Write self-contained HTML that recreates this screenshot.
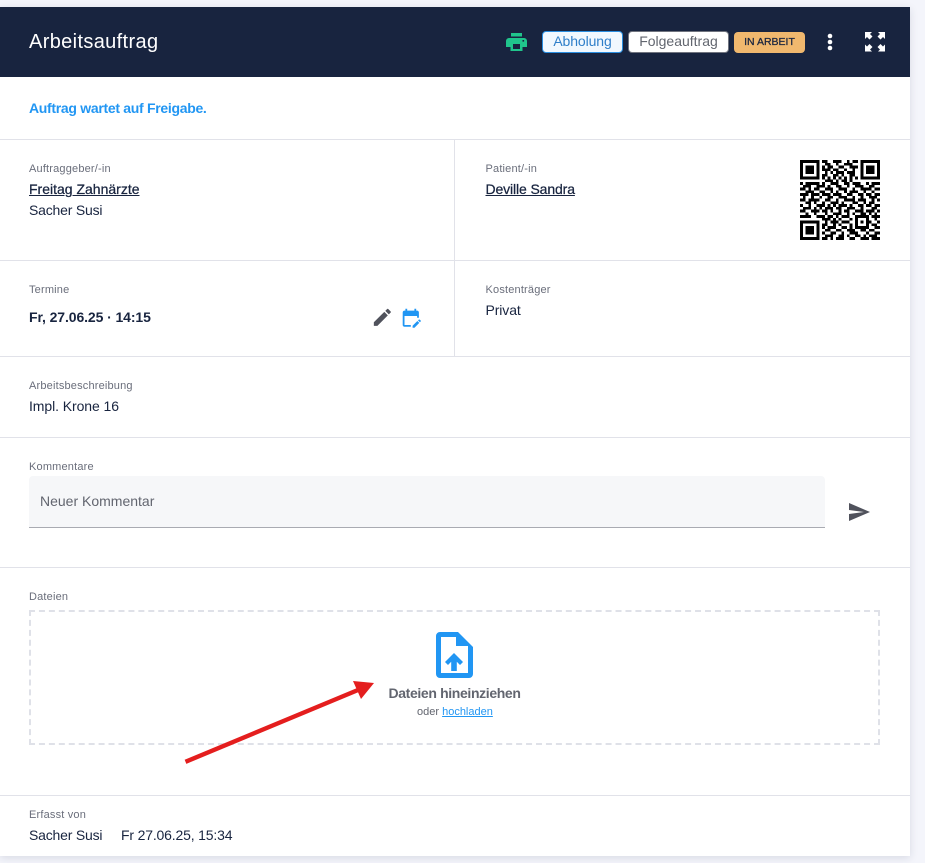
<!DOCTYPE html>
<html lang="de">
<head>
<meta charset="utf-8">
<title>Arbeitsauftrag</title>
<style>
html,body{margin:0;padding:0;width:925px;height:863px;overflow:hidden;background:#f4f5fb;font-family:"Liberation Sans",Arial,sans-serif;color:#18243f}
#card{position:absolute;left:0;top:7px;width:910px;height:849px;background:#fff;box-shadow:0 2px 8px rgba(30,40,70,.13)}
#head{position:absolute;left:0;top:7px;width:910px;height:70px;background:#18243f}
.t{position:absolute;white-space:nowrap;line-height:20px;font-size:14px}
.l{font-size:11px;color:#6a6e7b;letter-spacing:.18px;margin-top:1px}
.m{-webkit-text-stroke:.25px currentColor}
.hr{position:absolute;left:0;width:910px;height:1px;background:#e1e2e9}
.b{position:absolute;box-sizing:border-box;border-radius:4px;text-align:center;white-space:nowrap}
svg{position:absolute;overflow:visible}
a{color:inherit}
</style>
</head>
<body>
<div id="card"></div>
<div id="head"></div>
<div class="t" style="left:29px;top:31px;font-size:20px;line-height:22px;color:#fff;letter-spacing:.35px">Arbeitsauftrag</div>

<svg style="left:0;top:0" width="925" height="100"><path fill="#20c58c" fill-rule="evenodd" d="M511 33h11v3.5h-11zM509 38h15a3 3 0 0 1 3 3v6h-4.5v4h-12v-4H506v-6a3 3 0 0 1 3-3zM513 44v5h7v-5zM522.5 40v1.6h1.6V40z"/></svg>
<div class="b" style="left:542px;top:31px;width:81px;height:22px;background:#f1f8fe;border:1.5px solid #2a8ee0;color:#2f7fc9;font-size:14px;line-height:18.5px;letter-spacing:-.1px">Abholung</div>
<div class="b" style="left:628px;top:31px;width:101px;height:22px;background:#fff;border:1.5px solid #70747f;color:#62666f;font-size:14px;line-height:18.5px">Folgeauftrag</div>
<div class="b m" style="left:734px;top:32px;width:71px;height:21px;background:#f0b86e;color:#18243f;font-size:10.5px;line-height:21px">IN ARBEIT</div>
<svg style="left:826px;top:33px" width="8" height="18" viewBox="0 0 8 18"><circle cx="4" cy="3" r="2.3" fill="#fff"/><circle cx="4" cy="9" r="2.3" fill="#fff"/><circle cx="4" cy="15" r="2.3" fill="#fff"/></svg>
<svg style="left:865px;top:32px" width="20" height="20" viewBox="0 0 20 20" fill="#fff"><path d="M0 0h7L5 2l2.500 2.500L4.500 7.500 2 5l-2 2zM20 0h-7l2 2-2.500 2.500 3 3L18 5l2 2zM0 19.500h7l-2-2 2.500-2.500-3-3L2 14.500l-2-2zM20 19.500h-7l2-2-2.500-2.500 3-3 2.500 2.500 2-2z"/></svg>

<div class="t m" style="left:29px;top:98px;color:#2196f3;font-weight:bold;-webkit-text-stroke:0;letter-spacing:-.3px">Auftrag wartet auf Freigabe.</div>

<div class="hr" style="top:139px"></div>
<div class="hr" style="top:260px"></div>
<div class="hr" style="top:356px"></div>
<div class="hr" style="top:437px"></div>
<div class="hr" style="top:567px"></div>
<div class="hr" style="top:795px"></div>
<div style="position:absolute;left:454px;top:140px;width:1px;height:216px;background:#e1e2e9"></div>

<div class="t l" style="left:29px;top:158px">Auftraggeber/-in</div>
<div class="t m" style="left:29px;top:179px;text-decoration:underline">Freitag Zahnärzte</div>
<div class="t" style="left:29px;top:200px;letter-spacing:-.2px">Sacher Susi</div>

<div class="t l" style="left:485.500px;top:158px">Patient/-in</div>
<div class="t m" style="left:485.500px;top:179px;text-decoration:underline;letter-spacing:-.12px">Deville Sandra</div>

<svg style="left:800px;top:160px" width="80" height="80" viewBox="0 0 29 29" shape-rendering="crispEdges"><path fill="none" stroke="#000" stroke-width="1" d="
M0 .5h7M22 .5h7M8 .5h2M12 .5h3M17 .5h1M19 .5h2
M0 1.5h1M6 1.5h1M22 1.5h1M28 1.5h1M9 1.5h2M13 1.5h1M16 1.5h3
M0 2.5h1M2 2.5h3M6 2.5h1M22 2.5h1M24 2.5h3M28 2.5h1M8 2.5h1M10 2.5h2M14 2.5h2M18 2.5h3
M0 3.5h1M2 3.5h3M6 3.5h1M22 3.5h1M24 3.5h3M28 3.5h1M8 3.5h3M12 3.5h2M16 3.5h1M19 3.5h1
M0 4.5h1M2 4.5h3M6 4.5h1M22 4.5h1M24 4.5h3M28 4.5h1M9 4.5h1M11 4.5h1M13 4.5h3M17 4.5h3
M0 5.5h1M6 5.5h1M22 5.5h1M28 5.5h1M8 5.5h2M12 5.500h2M15 5.500h1M18 5.500h2
M0 6.5h7M22 6.5h7M8 6.500h1M10 6.500h1M12 6.500h1M14 6.500h1M16 6.500h1M18 6.500h1M20 6.500h1
M9 7.500h3M13 7.500h1M15 7.500h2M18 7.500h1
M0 8.500h1M2 8.500h5M8 8.500h1M11 8.500h3M16 8.500h2M19 8.500h3M24 8.500h1M26 8.500h3
M1 9.500h3M6 9.500h3M10 9.500h1M13 9.500h2M17 9.500h1M20 9.500h3M25 9.500h2
M0 10.500h2M3 10.500h1M5 10.500h2M9 10.500h3M14 10.500h3M19 10.500h1M22 10.500h4M27 10.500h2
M2 11.500h3M7 11.500h2M11 11.500h1M13 11.500h1M16 11.500h1M18 11.500h3M23 11.500h1M26 11.500h1
M0 12.500h3M4 12.500h3M8 12.500h3M12 12.500h3M17 12.500h2M21 12.500h2M24 12.500h2M27 12.500h2
M1 13.500h1M4 13.500h1M7 13.500h1M10 13.500h2M14 13.500h3M19 13.500h1M22 13.500h1M25 13.500h3
M0 14.500h2M3 14.500h4M9 14.500h2M13 14.500h1M16 14.500h4M21 14.500h3M26 14.500h1M28 14.500h1
M2 15.500h2M5 15.500h1M8 15.500h1M11 15.500h3M15 15.500h1M19 15.500h2M23 15.500h1M25 15.500h2
M0 16.500h1M3 16.500h1M6 16.500h3M10 16.500h1M12 16.500h1M14 16.500h3M18 16.500h1M21 16.500h2M24 16.500h2M27 16.500h2
M1 17.500h3M5 17.500h1M7 17.500h1M9 17.500h3M13 17.500h2M17 17.500h3M22 17.500h1M26 17.500h2
M0 18.500h2M4 18.500h3M8 18.500h2M11 18.500h1M14 18.500h1M16 18.500h2M20 18.500h3M24 18.500h3M28 18.500h1
M2 19.500h1M5 19.500h1M9 19.500h1M12 19.500h3M17 19.500h1M19 19.500h1M22 19.500h2M25 19.500h1M27 19.500h1
M0 20.500h4M6 20.500h3M10 20.500h2M13 20.500h1M15 20.500h3M20 20.500h5M26 20.500h3
M8 21.500h3M12 21.500h1M14 21.500h1M18 21.500h1M20 21.500h1M24 21.500h1M27 21.500h1
M0 22.500h7M9 22.500h1M11 22.500h3M15 22.500h3M20 22.500h1M22 22.500h1M24 22.500h2M28 22.500h1
M0 23.500h1M6 23.500h1M8 23.500h2M12 23.500h1M14 23.500h1M18 23.500h1M20 23.500h1M24 23.500h1M26 23.500h2
M0 24.500h1M2 24.500h3M6 24.500h1M8 24.500h1M10 24.500h3M15 24.500h2M18 24.500h1M20 24.500h5M27 24.500h2
M0 25.500h1M2 25.500h3M6 25.500h1M9 25.500h2M13 25.500h2M17 25.500h3M22 25.500h2M25 25.500h2
M0 26.500h1M2 26.500h3M6 26.500h1M8 26.500h1M11 26.500h2M15 26.500h1M18 26.500h3M24 26.500h1M27 26.500h2
M0 27.500h1M6 27.500h1M9 27.500h3M14 27.500h2M17 27.500h1M20 27.500h2M23 27.500h1M25 27.500h3
M0 28.500h7M8 28.500h2M11 28.500h1M13 28.500h3M18 28.500h2M22 28.500h3M26 28.500h3
"/></svg>

<div class="t l" style="left:29px;top:279px">Termine</div>
<div class="t" style="left:29px;top:307px;font-weight:bold;letter-spacing:-.1px">Fr, 27.06.25 · 14:15</div>
<svg style="left:371px;top:306px" width="22.700" height="22.700" viewBox="0 0 24 24"><path fill="#50525c" d="M3 17.25V21h3.75L17.81 9.94l-3.75-3.75L3 17.25zM20.71 7.04a1 1 0 0 0 0-1.41l-2.34-2.34a1 1 0 0 0-1.41 0l-1.83 1.83 3.75 3.75 1.83-1.83z"/></svg>
<svg style="left:400.300px;top:307.200px" width="21.600" height="21.600" viewBox="0 0 24 24"><path fill="#2196f3" d="M5 10h14v2h2V6c0-1.100-.9-2-2-2h-1V2h-2v2H8V2H6v2H5c-1.110 0-1.990.9-1.990 2L3 20c0 1.100.89 2 2 2h7v-2H5V10zm17.840 6.280-.71.71-2.120-2.120.71-.71c.39-.39 1.020-.39 1.410 0l.71.71c.39.39.39 1.020 0 1.410zm-3.540-.7 2.120 2.120-5.300 5.300H14v-2.120l5.300-5.300z"/></svg>

<div class="t l" style="left:485.500px;top:279px">Kostenträger</div>
<div class="t" style="left:485.500px;top:300px;letter-spacing:-.1px">Privat</div>

<div class="t l" style="left:29px;top:375px">Arbeitsbeschreibung</div>
<div class="t" style="left:29px;top:396px;letter-spacing:-.08px">Impl. Krone 16</div>

<div class="t l" style="left:29px;top:456px">Kommentare</div>
<div style="position:absolute;left:29px;top:476px;width:796px;height:51px;background:#f6f7f9;border-bottom:1px solid #a9abb2;border-radius:4px 4px 0 0"></div>
<div class="t" style="left:40px;top:491px;color:#62656f">Neuer Kommentar</div>
<svg style="left:847px;top:500px" width="24" height="24" viewBox="0 0 24 24"><path fill="#50525c" d="M2.010 21 23 12 2.010 3 2 10l15 2-15 2z"/></svg>

<div class="t l" style="left:29px;top:586px">Dateien</div>
<div style="position:absolute;left:29px;top:610px;width:847px;height:131px;border:2px dashed #dfe1e8"></div>
<svg style="left:0;top:0" width="925" height="863"><path fill="#2196f3" fill-rule="evenodd" d="M440 632H458L473 647V674a4 4 0 0 1-4 4H440a4 4 0 0 1-4-4V636a4 4 0 0 1 4-4zM441 637V673H468V646H456V637z"/><path fill="#2196f3" d="M454 653L463 662L460 665L456.800 661.800V671H451.200V661.800L448 665L445 662z"/></svg>
<div class="t" style="left:388.500px;top:683px;font-weight:bold;color:#62656f;letter-spacing:-.36px">Dateien hineinziehen</div>
<div class="t" style="left:417px;top:702px;font-size:11px;color:#62656f">oder <a href="#" style="color:#2196f3">hochladen</a></div>
<svg style="left:0;top:0" width="925" height="863"><path d="M185.500 761.800 L358 690" stroke="#e41e1e" stroke-width="4.400" fill="none"/><path fill="#e41e1e" d="M374 683 L353 681 L361 699z"/></svg>

<div class="t l" style="left:29px;top:804px">Erfasst von</div>
<div class="t" style="left:29px;top:825px;letter-spacing:-.2px">Sacher Susi</div>
<div class="t" style="left:121px;top:825px;letter-spacing:-.17px">Fr 27.06.25, 15:34</div>
</body>
</html>
